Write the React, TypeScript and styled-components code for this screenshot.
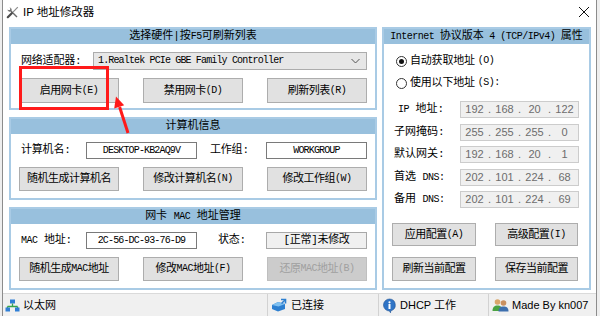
import React from 'react'
import styled, { createGlobalStyle } from 'styled-components'

const mono = `"Liberation Mono", "Noto Sans CJK SC", monospace`
const ui = `"Liberation Sans", "Noto Sans CJK SC", sans-serif`

const GlobalStyle = createGlobalStyle`
  html, body { margin: 0; padding: 0; background: #f0f0f0; }
  * { box-sizing: border-box; }
`

const Stage = styled.div`
  position: relative;
  width: 600px;
  height: 316px;
  overflow: hidden;
  display: flex;
  background: #eeeeee;
`

const Window = styled.div`
  margin-left: 2px;
  width: 595px;
  height: 316px;
  border-left: 1px solid #8c8c8c;
  border-right: 1px solid #8c8c8c;
  background: #fff;
  display: flex;
  flex-direction: column;
`

const TitleBar = styled.div`
  height: 27px;
  display: flex;
  align-items: center;
  gap: 4px;
  padding: 0 6px 3px 3px;
  font: 11.5px/14px ${ui};
  color: #000;
`

const CloseBtn = styled.div`
  margin-left: auto;
  display: flex;
`

const Body = styled.div`
  height: 263px;
  display: flex;
  gap: 5px;
  padding: 0 5px 0 6px;
`

const LeftColumn = styled.div`
  width: 369px;
  display: flex;
  flex-direction: column;
  gap: 7px;
`

const Panel = styled.section<{ $h: number }>`
  height: ${p => p.$h}px;
  border: 2px solid #a9cbe5;
  display: flex;
  flex-direction: column;
  background: #fff;
`

const PanelHeader = styled.div`
  height: 15px;
  background: #98c0dd;
  font: 11px/15px ${mono};
  text-align: center;
  color: #000;
  white-space: nowrap;
  overflow: hidden;
`

const PanelBody = styled.div`
  padding: 8px 8px 0;
  display: flex;
  flex-direction: column;
  gap: 8px;
`

const AdapterRow = styled.div`
  height: 18px;
  display: flex;
  align-items: center;
`

const InfoRow = styled.div`
  height: 17px;
  display: grid;
  grid-template-columns: 67px 111px 69px 101px;
  align-items: center;
`

const Label = styled.span<{ $indent?: number; $w?: number }>`
  padding-left: ${p => p.$indent ?? 2}px;
  ${p => (p.$w ? `width: ${p.$w}px; flex: none;` : '')}
  font: 11px/17px ${mono};
  letter-spacing: -0.2px;
  color: #000;
  white-space: nowrap;
`

/* narrow half-width latin, like the SimSun half-width glyphs */
const Latin = styled.span`
  font-size: 10px;
  letter-spacing: -0.5px;
`

const Select = styled.div`
  flex: 1;
  height: 18px;
  display: flex;
  align-items: center;
  padding: 0 6px 0 4px;
  background: #e7e7e7;
  border: 1px solid #acacac;
  font: 10px/16px ${mono};
  letter-spacing: -0.85px;
  color: #000;
  white-space: nowrap;
  & > svg { margin-left: auto; }
`

const TextBox = styled.div<{ $bg?: string; $tight?: boolean }>`
  height: 17px;
  border: 1px solid ${p => (p.$bg ? '#a8a8a8' : '#7a7a7a')};
  background: ${p => p.$bg ?? '#fff'};
  text-align: center;
  font: ${p => (p.$tight ? `10px/15px` : `11px/15px`)} ${mono};
  letter-spacing: ${p => (p.$tight ? '-0.85px' : '-0.3px')};
  color: #000;
  white-space: nowrap;
`

const ButtonRow = styled.div`
  display: flex;
  justify-content: space-between;
`

const Button = styled.div<{ $w?: number; $h?: number; $disabled?: boolean }>`
  width: ${p => p.$w ?? 100}px;
  height: ${p => p.$h ?? 25}px;
  display: flex;
  align-items: center;
  justify-content: center;
  background: ${p => (p.$disabled ? '#cccccc' : '#e1e1e1')};
  border: 1px solid ${p => (p.$disabled ? '#bfbfbf' : '#adadad')};
  color: ${p => (p.$disabled ? '#a0a0a0' : '#000')};
  font: 11px/14px ${mono};
  letter-spacing: -0.5px;
  white-space: nowrap;
`

const SidePanel = styled(Panel)`
  flex: 1;
`

const SideBody = styled.div`
  padding: 8px 10px 0 10px;
  display: flex;
  flex-direction: column;
`

const RadioGroup = styled.div`
  display: flex;
  flex-direction: column;
  gap: 4px;
  padding-left: 2px;
`

const RadioRow = styled.div`
  height: 18px;
  display: flex;
  align-items: center;
  gap: 3px;
  font: 11px/18px ${mono};
  letter-spacing: -0.2px;
  color: #000;
`

const RadioDot = styled.span<{ $on?: boolean }>`
  width: 11px;
  height: 11px;
  border-radius: 50%;
  border: 1px solid #333;
  display: grid;
  place-items: center;
  background: #fff;
  &::after {
    content: '';
    width: 5px;
    height: 5px;
    border-radius: 50%;
    background: ${p => (p.$on ? '#111' : 'transparent')};
  }
`

const IpList = styled.div`
  margin-top: 9px;
  display: flex;
  flex-direction: column;
  gap: 5.5px;
`

const IpRow = styled.div`
  height: 17px;
  display: grid;
  grid-template-columns: 66px 119px;
  align-items: center;
  font: 11px/17px ${mono};
  color: #000;
  white-space: nowrap;
`

const IpLabel = styled.span<{ $indent?: number }>`
  padding-left: ${p => p.$indent ?? 0}px;
`

const IpBox = styled.div`
  height: 17px;
  display: flex;
  align-items: center;
  background: #f0f0f0;
  border: 1px solid #cccccc;
  font: 11px/15px ${ui};
  color: #6d6d6d;
`

const Octet = styled.span`
  width: 27px;
  text-align: center;
`

const Dot = styled.span`
  width: 3px;
  text-align: center;
`

const SideButtons = styled.div`
  margin: 15px 0 0 -2px;
  display: grid;
  grid-template-columns: 84px 83px;
  column-gap: 19px;
  row-gap: 11px;
`

const StatusBar = styled.div`
  margin-top: 3px;
  height: 23px;
  display: flex;
  background: #f0f0f0;
  border-top: 1px solid #dadada;
  font: 11px/22px ${ui};
  color: #000;
`

const StatusPane = styled.div<{ $w: number; $first?: boolean }>`
  width: ${p => p.$w}px;
  display: flex;
  align-items: center;
  gap: 3px;
  padding-left: ${p => (p.$first ? 2 : 3)}px;
  border-left: ${p => (p.$first ? 'none' : '1px solid #d2d2d2')};
  white-space: nowrap;
`

const RedBox = styled.div`
  position: absolute;
  left: 19px;
  top: 66px;
  width: 90px;
  height: 44px;
  border: 3px solid #ff1a1a;
  pointer-events: none;
`

const Arrow = styled.svg`
  position: absolute;
  left: 105px;
  top: 90px;
`

const ToolsIcon = () => (
  <svg width="13" height="13" viewBox="0 0 13 13">
    <path d="M1.5 3.5a2.2 2.2 0 0 0 3 2l6 6 1-1-6-6a2.2 2.2 0 0 0-2-3l1 1.2-.6 1.2-1.2.4z" fill="#6a6a6a" />
    <path d="M11.8 1.2l-4.6 4.6" stroke="#8a8a8a" strokeWidth="1.2" />
    <path d="M5.8 7.2l-4 4" stroke="#4a4a4a" strokeWidth="2.2" strokeLinecap="round" />
  </svg>
)

const CloseIcon = () => (
  <svg width="12" height="12" viewBox="0 0 12 12">
    <path d="M1 1l10 10M11 1L1 11" stroke="#111" strokeWidth="1" />
  </svg>
)

const Chevron = () => (
  <svg width="9" height="6" viewBox="0 0 9 6">
    <path d="M0.5 1l4 4 4-4" fill="none" stroke="#555" strokeWidth="1" />
  </svg>
)

const NetIcon = () => (
  <svg width="15" height="13" viewBox="0 0 15 13">
    <rect x="5" y="0.5" width="5" height="4" fill="#2f7fd6" />
    <path d="M7.5 4.5v3M2.5 7.5h10M2.5 7.5v1.5M12.5 7.5v1.5" stroke="#36a34a" strokeWidth="1.3" />
    <rect x="0.5" y="8.5" width="4.5" height="4" fill="#2f7fd6" />
    <rect x="10" y="8.5" width="4.5" height="4" fill="#2f7fd6" />
  </svg>
)

const LinkIcon = () => (
  <svg width="17" height="14" viewBox="0 0 17 14">
    <path d="M1 7l6-3 7 2v5l-7 2.5L1 11z" fill="#2d7fd0" />
    <path d="M1 7l6-3 7 2-6.5 2.5z" fill="#7fc0f0" />
    <path d="M10 1.5h4.5v4" fill="none" stroke="#2d7fd0" strokeWidth="1.6" />
    <path d="M14.5 1.5l-4 4" stroke="#2d7fd0" strokeWidth="1.6" />
  </svg>
)

const InfoIcon = () => (
  <svg width="15" height="15" viewBox="0 0 15 15">
    <path d="M7.5 1a6 6 0 1 0 0 12l1 1.8.3-2a6 6 0 0 0-1.3-11.8z" fill="#2f74c6" stroke="#1b4f92" strokeWidth="0.6" />
    <circle cx="7.5" cy="4.3" r="1.1" fill="#fff" />
    <rect x="6.5" y="6" width="2" height="5" fill="#fff" />
  </svg>
)

const UsersIcon = () => (
  <svg width="17" height="14" viewBox="0 0 17 14">
    <circle cx="5.5" cy="4" r="2.8" fill="#d9a66b" />
    <path d="M0.5 13c0-4 2-5.5 5-5.5s5 1.5 5 5.5z" fill="#4aa342" />
    <circle cx="11.5" cy="5" r="2.8" fill="#c99060" />
    <path d="M6.5 13.5c0-3.8 2-5 5-5s5 1.2 5 5z" fill="#3d6fae" />
  </svg>
)

const IpValue = ({ parts }: { parts: string[] }) => (
  <IpBox>
    {parts.map((v, i) => (
      <React.Fragment key={i}>
        {i > 0 && <Dot>.</Dot>}
        <Octet>{v}</Octet>
      </React.Fragment>
    ))}
  </IpBox>
)

const ipRows = [
  { label: 'IP', rest: ' 地址:', indent: 4, parts: ['192', '168', '20', '122'] },
  { label: '', rest: '子网掩码:', parts: ['255', '255', '255', '0'] },
  { label: '', rest: '默认网关:', parts: ['192', '168', '20', '1'] },
  { label: '', rest: '首选 ', tail: 'DNS:', parts: ['202', '101', '224', '68'] },
  { label: '', rest: '备用 ', tail: 'DNS:', parts: ['202', '101', '224', '69'] },
]

export default function App() {
  return (
    <Stage>
      <GlobalStyle />
      <Window>
        <TitleBar>
          <ToolsIcon />
          <span>IP 地址修改器</span>
          <CloseBtn>
            <CloseIcon />
          </CloseBtn>
        </TitleBar>
        <Body>
          <LeftColumn>
            <Panel $h={83}>
              <PanelHeader>
                选择硬件|按<Latin>F5</Latin>可刷新列表
              </PanelHeader>
              <PanelBody>
                <AdapterRow>
                  <Label $w={74}>网络适配器:</Label>
                  <Select>
                    1.Realtek PCIe GBE Family Controller
                    <Chevron />
                  </Select>
                </AdapterRow>
                <ButtonRow>
                  <Button>
                    启用网卡<Latin>(E)</Latin>
                  </Button>
                  <Button>
                    禁用网卡<Latin>(D)</Latin>
                  </Button>
                  <Button>
                    刷新列表<Latin>(R)</Latin>
                  </Button>
                </ButtonRow>
              </PanelBody>
            </Panel>
            <Panel $h={83}>
              <PanelHeader>计算机信息</PanelHeader>
              <PanelBody>
                <InfoRow>
                  <Label>计算机名:</Label>
                  <TextBox $tight>DESKTOP-KB2AQ9V</TextBox>
                  <Label $indent={13}>工作组:</Label>
                  <TextBox $tight>WORKGROUP</TextBox>
                </InfoRow>
                <ButtonRow>
                  <Button $h={24}>随机生成计算机名</Button>
                  <Button $h={24}>
                    修改计算机名<Latin>(N)</Latin>
                  </Button>
                  <Button $h={24}>
                    修改工作组<Latin>(W)</Latin>
                  </Button>
                </ButtonRow>
              </PanelBody>
            </Panel>
            <Panel $h={83}>
              <PanelHeader>
                网卡 <Latin>MAC</Latin> 地址管理
              </PanelHeader>
              <PanelBody>
                <InfoRow>
                  <Label>
                    <Latin>MAC</Latin> 地址:
                  </Label>
                  <TextBox $tight>2C-56-DC-93-76-D9</TextBox>
                  <Label $indent={21}>状态:</Label>
                  <TextBox $bg="#f0f0f0">[正常]未修改</TextBox>
                </InfoRow>
                <ButtonRow>
                  <Button $h={24}>
                    随机生成<Latin>MAC</Latin>地址
                  </Button>
                  <Button $h={24}>
                    修改<Latin>MAC</Latin>地址<Latin>(F)</Latin>
                  </Button>
                  <Button $h={24} $disabled>
                    还原<Latin>MAC</Latin>地址<Latin>(B)</Latin>
                  </Button>
                </ButtonRow>
              </PanelBody>
            </Panel>
          </LeftColumn>
          <SidePanel $h={263}>
            <PanelHeader>
              <Latin>Internet </Latin>协议版本<Latin> 4 (TCP/IPv4) </Latin>属性
            </PanelHeader>
            <SideBody>
              <RadioGroup>
                <RadioRow>
                  <RadioDot $on />
                  自动获取地址<Latin>(O)</Latin>
                </RadioRow>
                <RadioRow>
                  <RadioDot />
                  使用以下地址<Latin>(S):</Latin>
                </RadioRow>
              </RadioGroup>
              <IpList>
                {ipRows.map(r => (
                  <IpRow key={r.rest + (r.tail ?? '') + r.parts[3]}>
                    <IpLabel $indent={r.indent}>
                      {r.label && <Latin>{r.label}</Latin>}
                      {r.rest}
                      {r.tail && <Latin>{r.tail}</Latin>}
                    </IpLabel>
                    <IpValue parts={r.parts} />
                  </IpRow>
                ))}
              </IpList>
              <SideButtons>
                <Button $w={84} $h={23}>
                  应用配置<Latin>(A)</Latin>
                </Button>
                <Button $w={83} $h={23}>
                  高级配置<Latin>(I)</Latin>
                </Button>
                <Button $w={84} $h={24}>刷新当前配置</Button>
                <Button $w={83} $h={24}>保存当前配置</Button>
              </SideButtons>
            </SideBody>
          </SidePanel>
        </Body>
        <StatusBar>
          <StatusPane $w={264} $first>
            <NetIcon />
            以太网
          </StatusPane>
          <StatusPane $w={111}>
            <LinkIcon />
            已连接
          </StatusPane>
          <StatusPane $w={110}>
            <InfoIcon />
            DHCP 工作
          </StatusPane>
          <StatusPane $w={108}>
            <UsersIcon />
            Made By kn007
          </StatusPane>
        </StatusBar>
      </Window>
      <RedBox />
      <Arrow width="30" height="50" viewBox="0 0 30 50">
        <path d="M23 43L14.6 17" stroke="#ff1a1a" strokeWidth="3" />
        <path d="M11 6.5L19.2 15.2L9.2 18.4z" fill="#ff1a1a" />
      </Arrow>
    </Stage>
  )
}
